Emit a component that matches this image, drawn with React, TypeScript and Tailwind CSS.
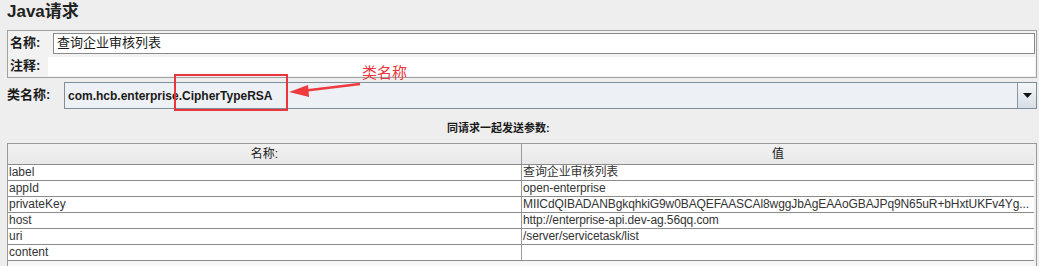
import React from 'react';

const font = "font-['Liberation_Sans','Noto_Sans_CJK_SC',sans-serif]";

const params: { name: string; value: string }[] = [
  { name: 'label', value: '查询企业审核列表' },
  { name: 'appId', value: 'open-enterprise' },
  { name: 'privateKey', value: 'MIICdQIBADANBgkqhkiG9w0BAQEFAASCAl8wggJbAgEAAoGBAJPq9N65uR+bHxtUKFv4Yg...' },
  { name: 'host', value: 'http://enterprise-api.dev-ag.56qq.com' },
  { name: 'uri', value: '/server/servicetask/list' },
  { name: 'content', value: '' },
];

const App: React.FC = () => {
  return (
    <div className={`relative w-[1039px] h-[266px] overflow-hidden bg-[#eeeeee] text-[#1a1a1a] ${font}`}>
      {/* title */}
      <div className="h-[30px] pl-[7px] pt-[1px] text-[17px] font-bold leading-[22px] text-[#222]">Java请求</div>

      {/* name / comment panel */}
      <div className="mx-[7px] mr-[2px] h-[48px] border border-[#a0a0a0] bg-[#f2f2f2]">
        <div className="flex h-[24px] items-center">
          <span className="w-[45px] pl-[2px] text-[13px] font-bold">名称:</span>
          <div className="flex h-[21px] flex-1 items-center border border-[#8a8a8a] bg-white pl-[3px] text-[13px] mr-[1px]">
            查询企业审核列表
          </div>
        </div>
        <div className="flex h-[22px] items-center">
          <span className="w-[40px] pl-[2px] text-[13px] font-bold">注释:</span>
          <div className="h-[19px] flex-1 bg-white mr-[1px]" />
        </div>
      </div>

      {/* class name row */}
      <div className="flex h-[32px] items-start pl-[7px] pt-[4px]">
        <span className="w-[57px] pt-[5px] text-[13px] font-bold leading-[16px]">类名称:</span>
        <div className="flex h-[27px] flex-1 items-stretch border border-[#7f8c99] bg-[#edf0f4] mr-[2px]">
          <div className="flex flex-1 items-center pl-[3px] text-[12px] font-bold">com.hcb.enterprise.CipherTypeRSA</div>
          <div className="flex w-[19px] items-center justify-center border-l border-[#8a98a6] bg-gradient-to-b from-[#f4f7fa] to-[#d7dee6]">
            <svg width="9" height="5" viewBox="0 0 9 5"><path d="M0 0h9L4.5 5z" fill="#111" /></svg>
          </div>
        </div>
      </div>

      {/* parameter heading */}
      <div className="h-[33px] pl-[447px] pt-[11px] text-[11px] font-bold leading-[14px]">同请求一起发送参数:</div>

      {/* table */}
      <div className="mx-[7px] mr-[2px] border-t border-r border-[#9a9a9a]">
        <div className="mr-[2px] border-l border-[#9a9a9a]">
          <div className="flex h-[21px] border-b border-[#8c8c8c] bg-gradient-to-b from-[#f2f2f2] to-[#e8e8e8] text-[12px]">
            <div className="flex w-[514px] items-center justify-center border-r border-[#9a9a9a]">名称:</div>
            <div className="flex flex-1 items-center justify-center">值</div>
          </div>
          {params.map(p => (
            <div key={p.name} className="flex h-[16px] border-b border-[#8c8c8c] bg-white text-[12px] leading-[15px]">
              <div className="w-[514px] border-r border-[#9a9a9a] pl-[1px] text-[#333]">{p.name}</div>
              <div className="min-w-0 flex-1 whitespace-nowrap pl-[1px] tracking-[-0.1px] text-[#333]">{p.value}</div>
            </div>
          ))}
          <div className="h-[8px] bg-[#f7f7f7]" />
        </div>
      </div>

      {/* annotation overlay */}
      <div className="absolute left-[174px] top-[74px] h-[37px] w-[114px] border-2 border-[#e8363c]" />
      <svg className="absolute left-[286px] top-[78px]" width="80" height="22" viewBox="0 0 80 22">
        <path d="M74 6 L20 12.5" stroke="#ef3a3f" strokeWidth="2.5" fill="none" />
        <path d="M3 14 L22 7 L23 19 Z" fill="#ef3a3f" />
      </svg>
      <div className="absolute left-[362px] top-[64px] text-[15px] leading-[18px] text-[#e8363c]">类名称</div>
    </div>
  );
};

export default App;
